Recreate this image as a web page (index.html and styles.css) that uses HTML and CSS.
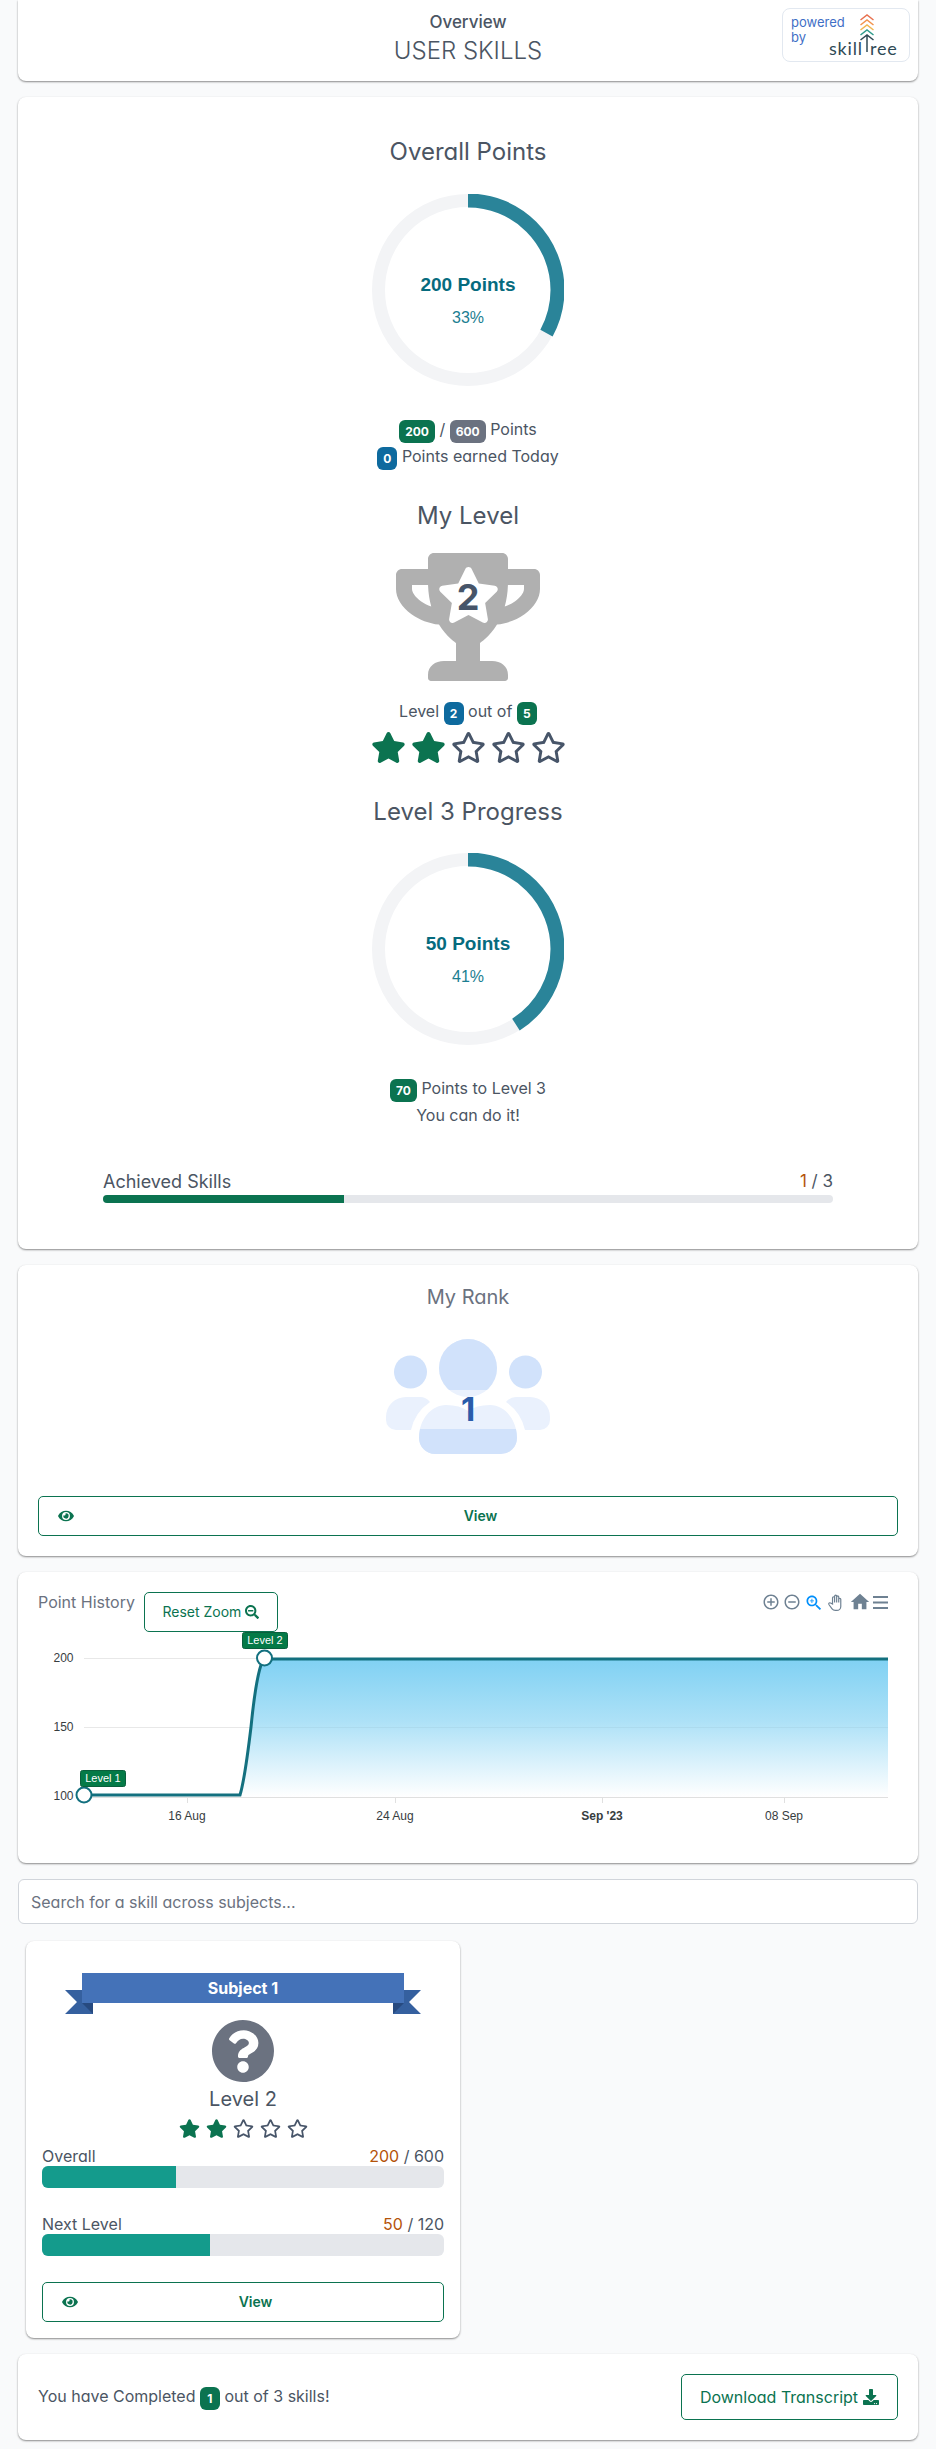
FILE: index.html
```html
<!DOCTYPE html>
<html lang="en">
<head>
    <meta charset="UTF-8">
    <meta name="viewport" content="width=device-width, initial-scale=1.0">
    <title>User Skills</title>
    <link rel="stylesheet" href="styles.css">
</head>
<body>
    <svg class="defs" width="0" height="0">
        <symbol id="star-full" viewBox="0 0 576 512"><path d="M259.3 17.8L194 150.2 47.9 171.5c-26.2 3.8-36.7 36.1-17.7 54.6l105.7 103-25 145.5c-4.5 26.3 23.2 46 46.4 33.7L288 439.6l130.7 68.7c23.2 12.2 50.9-7.4 46.4-33.7l-25-145.5 105.7-103c19-18.5 8.5-50.8-17.7-54.6L382 150.2 316.7 17.8c-11.7-23.6-45.6-23.9-57.4 0z"/></symbol>
        <symbol id="star-open" viewBox="0 0 576 512"><path d="M528.1 171.5L382 150.2 316.7 17.8c-11.7-23.6-45.6-23.9-57.4 0L194 150.2 47.9 171.5c-26.2 3.8-36.7 36.1-17.7 54.6l105.7 103-25 145.5c-4.5 26.3 23.2 46 46.4 33.7L288 439.6l130.7 68.7c23.2 12.2 50.9-7.4 46.4-33.7l-25-145.5 105.7-103c19-18.6 8.5-50.8-17.7-54.6zM388.6 312.3l23.7 138.4L288 385.4l-124.3 65.3 23.7-138.4-100.6-98 139-20.2 62.2-126 62.2 126 139 20.2-100.6 98z"/></symbol>
        <symbol id="eye" viewBox="0 0 576 512"><path d="M572.52 241.4C518.29 135.59 410.93 64 288 64S57.68 135.64 3.48 241.41a32.35 32.35 0 0 0 0 29.19C57.71 376.41 165.07 448 288 448s230.32-71.64 284.52-177.41a32.35 32.35 0 0 0 0-29.19zM288 400a144 144 0 1 1 144-144 143.93 143.93 0 0 1-144 144zm0-240a95.31 95.31 0 0 0-25.31 3.79 47.85 47.85 0 0 1-66.9 66.9A95.78 95.78 0 1 0 288 160z"/></symbol>
    </svg>

    <header class="card page-header">
        <div></div>
        <div class="page-title">
            <div class="title-small">Overview</div>
            <div class="title-big">USER SKILLS</div>
        </div>
        <div class="powered">
            <div class="powered-text">powered<br>by</div>
            <div class="logo">
                <span class="logo-text">skill<span class="logo-t">t</span>ree</span>
                <svg class="logo-arrows" width="16" height="38" viewBox="0 0 16 38">
                    <path d="M1.500 6l6.500-5 6.500 5" stroke="#e8714f"/>
                    <path d="M1.500 11l6.500-5 6.500 5" stroke="#f2944d"/>
                    <path d="M1.500 16l6.500-5 6.500 5" stroke="#f0b650"/>
                    <path d="M1.500 21l6.500-5 6.500 5" stroke="#2f9c8c"/>
                    <path d="M1.500 26l6.500-5 6.500 5M8 21v17" stroke="#2f4a55"/>
                </svg>
            </div>
        </div>
    </header>

    <section class="card overview">
        <h2 class="heading">Overall Points</h2>
        <svg class="donut donut-first" width="192" height="192" viewBox="0 0 192 192">
            <circle class="donut-track" cx="96" cy="96" r="89.5"/>
            <circle class="donut-value" cx="96" cy="96" r="89.5" pathLength="100" stroke-dasharray="33 100" transform="rotate(-90 96 96)"/>
            <text class="donut-big" x="96" y="97">200 Points</text>
            <text class="donut-small" x="96" y="129">33%</text>
        </svg>
        <div class="stat-lines">
            <div><span class="badge green">200</span> / <span class="badge gray">600</span> Points</div>
            <div><span class="badge blue">0</span> Points earned Today</div>
        </div>

        <h2 class="heading level-heading">My Level</h2>
        <svg class="trophy" width="144" height="128" viewBox="0 0 144 128">
            <svg width="144" height="128" viewBox="0 0 576 512"><path fill="#b0b0b0" d="M552 64H448V24c0-13.3-10.7-24-24-24H152c-13.3 0-24 10.7-24 24v40H24C10.7 64 0 74.7 0 88v56c0 35.7 22.5 72.4 61.9 100.7 31.5 22.7 69.8 37.1 110 41.7C203.3 338.5 240 360 240 360v72h-48c-35.3 0-64 20.7-64 56v12c0 6.6 5.4 12 12 12h296c6.6 0 12-5.4 12-12v-12c0-35.3-28.7-56-64-56h-48v-72s36.7-21.5 68.1-73.6c40.3-4.6 78.6-19 110-41.7 39.3-28.3 61.9-65 61.9-100.7V88c0-13.3-10.7-24-24-24zM99.3 192.8C74.9 175.2 64 155.6 64 144v-16h64.2c1 32.6 5.8 61.2 12.8 86.2-15.1-5.2-29.2-12.4-41.7-21.4zM512 144c0 16.1-17.7 36.1-35.3 48.8-12.5 9-26.7 16.2-41.8 21.4 7-25 11.8-53.6 12.8-86.2H512v16z"/></svg>
            <use href="#star-full" x="41" y="14" width="63" height="56" fill="#fff"/>
            <text class="trophy-num" x="72" y="57">2</text>
        </svg>
        <div class="level-line">Level <span class="badge blue">2</span> out of <span class="badge green">5</span></div>
        <div class="stars">
            <svg><use href="#star-full"/></svg>
            <svg><use href="#star-full"/></svg>
            <svg class="open"><use href="#star-open"/></svg>
            <svg class="open"><use href="#star-open"/></svg>
            <svg class="open"><use href="#star-open"/></svg>
        </div>

        <h2 class="heading progress-heading">Level 3 Progress</h2>
        <svg class="donut donut-second" width="192" height="192" viewBox="0 0 192 192">
            <circle class="donut-track" cx="96" cy="96" r="89.5"/>
            <circle class="donut-value" cx="96" cy="96" r="89.5" pathLength="100" stroke-dasharray="41 100" transform="rotate(-90 96 96)"/>
            <text class="donut-big" x="96" y="97">50 Points</text>
            <text class="donut-small" x="96" y="129">41%</text>
        </svg>
        <div class="stat-lines">
            <div><span class="badge green">70</span> Points to Level 3</div>
            <div>You can do it!</div>
        </div>

        <div class="achieved">
            <div class="achieved-row">
                <span>Achieved Skills</span>
                <span class="achieved-count"><span class="count">1</span> / 3</span>
            </div>
            <div class="thin-bar"><div class="thin-fill" style="width: 33%"></div></div>
        </div>
    </section>

    <section class="card rank">
        <h3 class="rank-title">My Rank</h3>
        <svg class="rank-icon" width="164" height="115" viewBox="386 1339 164 115">
            <defs>
                <clipPath id="head-top"><rect x="430" y="1330" width="80" height="60"/></clipPath>
                <clipPath id="body-bottom"><rect x="410" y="1429" width="120" height="30"/></clipPath>
            </defs>
            <circle class="rank-dark" cx="410.5" cy="1372" r="16.5"/>
            <circle class="rank-dark" cx="525.5" cy="1372" r="16.5"/>
            <path class="rank-light" d="M386 1417a20 20 0 0 1 20-20h14q6 0 10 5q-15 10-19 28h-15a10 10 0 0 1-10-10z"/>
            <path class="rank-light" d="M550 1417a20 20 0 0 0-20-20h-14q-6 0-10 5q15 10 19 28h15a10 10 0 0 0 10-10z"/>
            <circle class="rank-light" cx="468" cy="1368" r="29"/>
            <circle class="rank-dark" cx="468" cy="1368" r="29" clip-path="url(#head-top)"/>
            <path id="rank-body" class="rank-light" d="M419 1438c0-18 12-33 27-33q14 0 22 6q8-6 22-6c15 0 27 15 27 33a16 16 0 0 1-16 16h-66a16 16 0 0 1-16-16z"/>
            <path class="rank-dark" clip-path="url(#body-bottom)" d="M419 1438c0-18 12-33 27-33q14 0 22 6q8-6 22-6c15 0 27 15 27 33a16 16 0 0 1-16 16h-66a16 16 0 0 1-16-16z"/>
            <text class="rank-num" x="468" y="1421">1</text>
        </svg>
        <a class="view-btn">
            <svg class="view-eye"><use href="#eye"/></svg>
            <span class="view-text">View</span>
        </a>
    </section>

    <section class="card history">
        <div class="history-top">
            <span class="history-title">Point History</span>
            <a class="reset-btn">Reset Zoom
                <svg width="14" height="14" viewBox="0 0 512 512"><path d="M304 192v32c0 6.6-5.4 12-12 12H124c-6.6 0-12-5.4-12-12v-32c0-6.6 5.4-12 12-12h168c6.6 0 12 5.4 12 12zm201 284.7L476.7 505c-9.4 9.4-24.6 9.4-33.9 0L343 405.3c-4.5-4.5-7-10.6-7-17V372c-35.3 27.6-79.7 44-128 44C93.1 416 0 322.9 0 208S93.1 0 208 0s208 93.1 208 208c0 48.3-16.4 92.7-44 128h16.3c6.4 0 12.5 2.5 17 7l99.7 99.7c9.3 9.4 9.3 24.6 0 34zM344 208c0-75.2-60.8-136-136-136S72 132.8 72 208s60.8 136 136 136 136-60.8 136-136z"/></svg>
            </a>
            <div class="toolbar">
                <svg width="18" height="18" viewBox="0 0 24 24"><path d="M13 7h-2v4H7v2h4v4h2v-4h4v-2h-4V7zm-1-5C6.48 2 2 6.48 2 12s4.48 10 10 10 10-4.48 10-10S17.52 2 12 2zm0 18c-4.41 0-8-3.59-8-8s3.59-8 8-8 8 3.59 8 8-3.59 8-8 8z"/></svg>
                <svg width="18" height="18" viewBox="0 0 24 24"><path d="M7 11v2h10v-2H7zm5-9C6.48 2 2 6.48 2 12s4.48 10 10 10 10-4.48 10-10S17.52 2 12 2zm0 18c-4.41 0-8-3.59-8-8s3.59-8 8-8 8 3.59 8 8-3.59 8-8 8z"/></svg>
                <svg class="tool-active" width="20" height="20" viewBox="0 0 24 24"><path d="M15.5 14h-.79l-.28-.27C15.41 12.59 16 11.11 16 9.5 16 5.91 13.09 3 9.5 3S3 5.91 3 9.5 5.91 16 9.5 16c1.61 0 3.09-.59 4.23-1.57l.27.28v.79l5 4.99L20.49 19l-4.99-5zm-6 0C7.01 14 5 11.99 5 9.5S7.01 5 9.5 5 14 7.01 14 9.5 11.99 14 9.5 14z"/><path d="M12 10h-2v2H9v-2H7V9h2V7h1v2h2v1z"/></svg>
                <svg class="tool-hand" width="19" height="19" viewBox="0 0 24 24"><path d="M7 14V6a1.3 1.3 0 0 1 2.6 0v6V4a1.3 1.3 0 0 1 2.6 0v8V5a1.3 1.3 0 0 1 2.6 0v7V8a1.3 1.3 0 0 1 2.6 0v9a5 5 0 0 1-5 5h-2a5 5 0 0 1-4-2l-4-5.500a1.400 1.400 0 0 1 2.200-1.700z"/></svg>
                <svg class="tool-home" width="22" height="22" viewBox="0 0 24 24"><path d="M10 20v-6h4v6h5v-8h3L12 3 2 12h3v8z"/></svg>
                <svg class="tool-menu" width="15" height="14" viewBox="0 0 15 14"><path d="M0 0h15v2H0zM0 5.500h15v2H0zM0 11h15v2H0z"/></svg>
            </div>
        </div>
        <svg class="chart" width="860" height="211" viewBox="0 0 860 211">
            <defs>
                <linearGradient id="area-fill" x1="0" y1="0" x2="0" y2="1">
                    <stop offset="0" stop-color="#80d1f3"/>
                    <stop offset="0.45" stop-color="#ade1f7"/>
                    <stop offset="1" stop-color="#ffffff"/>
                </linearGradient>
            </defs>
            <line class="grid" x1="46" y1="26.500" x2="850" y2="26.500"/>
            <line class="grid" x1="46" y1="95.500" x2="850" y2="95.500"/>
            <line class="axis" x1="46" y1="165.500" x2="850" y2="165.500"/>
            <line class="axis" x1="149.500" y1="165" x2="149.500" y2="171"/>
            <line class="axis" x1="357.500" y1="165" x2="357.500" y2="171"/>
            <line class="axis" x1="564.500" y1="165" x2="564.500" y2="171"/>
            <line class="axis" x1="746.500" y1="165" x2="746.500" y2="171"/>
            <path fill="url(#area-fill)" d="M46 163H202C206 150 210 120 213 95C216 65 219 45 223 33C225 28 228 27 232 27H850V165H46z"/>
            <line class="grid-over" x1="214" y1="95.500" x2="850" y2="95.500"/>
            <path class="series" d="M46 163H202C206 150 210 120 213 95C216 65 219 45 223 33C225 28 228 27 232 27H850"/>
            <circle class="marker" cx="46" cy="163" r="7.500"/>
            <circle class="marker" cx="226.500" cy="26" r="7.500"/>
            <rect class="tag" x="42.500" y="138.500" width="45" height="16" rx="2"/>
            <text class="tag-text" x="65" y="150">Level 1</text>
            <rect class="tag" x="204.500" y="0.500" width="45" height="16" rx="2"/>
            <text class="tag-text" x="227" y="12">Level 2</text>
            <text class="y-label" x="35.500" y="30">200</text>
            <text class="y-label" x="35.500" y="99">150</text>
            <text class="y-label" x="35.500" y="168">100</text>
            <text class="x-label" x="149" y="188">16 Aug</text>
            <text class="x-label" x="357" y="188">24 Aug</text>
            <text class="x-label x-bold" x="564" y="188">Sep '23</text>
            <text class="x-label" x="746" y="188">08 Sep</text>
        </svg>
    </section>

    <input class="search" type="text" placeholder="Search for a skill across subjects...">

    <section class="card subject">
        <div class="ribbon">
            <svg class="ribbon-tails" width="356" height="24" viewBox="0 0 356 24">
                <path fill="#35609f" d="M0 0H17V13H28V24H0L12 12z"/>
                <path fill="#274a80" d="M17 13H28V24z"/>
                <path fill="#35609f" d="M356 0H339V13H328V24H356L344 12z"/>
                <path fill="#274a80" d="M339 13H328V24z"/>
            </svg>
            <div class="ribbon-bar">Subject 1</div>
        </div>
        <svg class="subject-icon" width="62" height="62" viewBox="8 8 496 496"><path d="M504 256c0 136.997-111.043 248-248 248S8 392.997 8 256C8 119.083 119.043 8 256 8s248 111.083 248 248zM262.655 90c-54.497 0-89.255 22.957-116.549 63.758-3.536 5.286-2.353 12.415 2.715 16.258l34.699 26.31c5.205 3.947 12.621 3.008 16.665-2.122 17.864-22.658 30.113-35.797 57.303-35.797 20.429 0 45.698 13.148 45.698 32.958 0 14.976-12.363 22.667-32.534 33.976C247.128 238.528 216 254.941 216 296v4c0 6.627 5.373 12 12 12h56c6.627 0 12-5.373 12-12v-1.333c0-28.462 83.186-29.647 83.186-106.667 0-58.002-60.165-102-116.531-102zM256 338c-25.365 0-46 20.635-46 46 0 25.364 20.635 46 46 46s46-20.636 46-46c0-25.365-20.635-46-46-46z"/></svg>
        <div class="subject-level">Level 2</div>
        <div class="stars stars-small">
            <svg><use href="#star-full"/></svg>
            <svg><use href="#star-full"/></svg>
            <svg class="open"><use href="#star-open"/></svg>
            <svg class="open"><use href="#star-open"/></svg>
            <svg class="open"><use href="#star-open"/></svg>
        </div>
        <div class="bar-label bar-first"><span>Overall</span><span><span class="count">200</span> / 600</span></div>
        <div class="thick-bar"><div class="thick-fill" style="width: 33.3%"></div></div>
        <div class="bar-label bar-second"><span>Next Level</span><span><span class="count">50</span> / 120</span></div>
        <div class="thick-bar"><div class="thick-fill" style="width: 41.7%"></div></div>
        <a class="view-btn subject-view">
            <svg class="view-eye"><use href="#eye"/></svg>
            <span class="view-text">View</span>
        </a>
    </section>

    <section class="card footer">
        <div>You have Completed <span class="badge green">1</span> out of 3 skills!</div>
        <a class="download-btn">Download Transcript
            <svg width="16" height="16" viewBox="0 0 512 512"><path d="M216 0h80c13.3 0 24 10.7 24 24v168h87.700c17.800 0 26.700 21.500 14.100 34.100L269.700 378.300c-7.500 7.500-19.800 7.500-27.300 0L90.100 226.100c-12.600-12.600-3.700-34.100 14.100-34.100H192V24c0-13.300 10.700-24 24-24zm296 376v112c0 13.300-10.700 24-24 24H24c-13.300 0-24-10.700-24-24V376c0-13.300 10.700-24 24-24h146.700l49 49c20.100 20.100 52.500 20.100 72.600 0l49-49H488c13.300 0 24 10.700 24 24zm-124 88c0-11-9-20-20-20s-20 9-20 20 9 20 20 20 20-9 20-20zm64 0c0-11-9-20-20-20s-20 9-20 20 9 20 20 20 20-9 20-20z"/></svg>
        </a>
    </section>
</body>
</html>
```

FILE: styles.css
```css
* {
    box-sizing: border-box;
}

body {
    margin: 0;
    padding: 0 18px 9px;
    background-color: #f9fafb;
    font-family: Inter, "Noto Sans", sans-serif;
    font-feature-settings: "cv11";
    font-size: 16px;
    line-height: 24px;
    color: #4b5563;
    display: flex;
    flex-direction: column;
    gap: 16px;
}

.defs {
    position: absolute;
}

.card {
    background-color: #fff;
    border-radius: 8px;
    box-shadow: 0 1px 2px rgba(0, 0, 0, 0.45);
}

/* Header */
.page-header {
    height: 81px;
    border-radius: 0 0 8px 8px;
    display: grid;
    grid-template-columns: 1fr auto 1fr;
    align-items: start;
    padding: 8px 8px 0;
}

.page-title {
    text-align: center;
    margin-top: 2px;
}

.title-small {
    font-size: 17px;
    font-weight: 500;
    line-height: 24px;
}

.title-big {
    font-size: 24px;
    font-weight: 300;
    line-height: 33px;
}

.powered {
    justify-self: end;
    position: relative;
    width: 128px;
    height: 54px;
    border: 1px solid #e2e8f0;
    border-radius: 8px;
    padding: 6px 8px;
}

.powered-text {
    font-size: 13px;
    line-height: 15px;
    color: #3f6fc6;
}

.logo {
    position: absolute;
    left: 46px;
    top: 5px;
    width: 70px;
    height: 44px;
}

.logo-arrows {
    position: absolute;
    left: 30px;
    top: 0;
    fill: none;
    stroke-width: 1.5;
}

.logo-text {
    position: absolute;
    left: 0;
    bottom: 0;
    font-family: Lato, sans-serif;
    font-size: 18px;
    line-height: 20px;
    letter-spacing: 0.8px;
    color: #2f4a55;
}

.logo-t {
    color: transparent;
}

/* Overview card */
.overview {
    height: 1152px;
    padding-top: 39px;
    display: flex;
    flex-direction: column;
    align-items: center;
}

.heading {
    margin: 0;
    font-size: 24px;
    font-weight: 400;
    line-height: 32px;
}

.donut {
    flex: none;
}

.donut-first {
    margin-top: 26px;
}

.donut-second {
    margin-top: 25px;
}

.donut-track {
    fill: none;
    stroke: #f3f4f6;
    stroke-width: 13;
}

.donut-value {
    fill: none;
    stroke: #2a8499;
    stroke-width: 14;
}

.donut-big {
    font-family: "Liberation Sans", Arial, sans-serif;
    font-size: 19px;
    font-weight: 700;
    text-anchor: middle;
    fill: #066b7e;
}

.donut-small {
    font-family: "Liberation Sans", Arial, sans-serif;
    font-size: 16px;
    text-anchor: middle;
    fill: #1c7e91;
}

.stat-lines {
    margin-top: 30px;
    text-align: center;
    line-height: 27px;
}

.badge {
    display: inline-block;
    min-width: 20px;
    padding: 0 6px;
    border-radius: 6px;
    font-size: 12px;
    font-weight: 700;
    line-height: 23px;
    color: #fff;
    text-align: center;
    vertical-align: -1px;
}

.green {
    background-color: #0b7350;
}

.gray {
    background-color: #6b7280;
}

.blue {
    background-color: #0e6a9e;
}

.level-heading {
    margin-top: 30px;
}

.trophy {
    margin-top: 21px;
    flex: none;
}

.trophy-num {
    font-size: 36px;
    font-weight: 700;
    text-anchor: middle;
    fill: #475569;
}

.level-line {
    margin-top: 16px;
    line-height: 28px;
}

.stars {
    display: flex;
    gap: 5px;
    margin-top: 7px;
    fill: #0b7350;
}

.stars svg {
    width: 35px;
    height: 31px;
}

.stars .open {
    fill: #475569;
}

.progress-heading {
    margin-top: 33px;
}

.achieved {
    align-self: stretch;
    margin: 39px 85px 0;
}

.achieved-row {
    display: flex;
    justify-content: space-between;
    height: 27px;
    font-size: 18px;
    line-height: 28px;
}

.achieved-count {
    font-size: 17px;
    line-height: 26px;
}

.count {
    color: #b45309;
}

.thin-bar {
    height: 8px;
    background-color: #e5e7eb;
    border-radius: 4px;
    overflow: hidden;
}

.thin-fill {
    height: 100%;
    background-color: #0b7350;
}

/* Rank */
.rank {
    height: 291px;
    padding: 18px 20px 20px;
    display: flex;
    flex-direction: column;
    align-items: center;
}

.rank-title {
    margin: 0;
    font-size: 20px;
    font-weight: 400;
    line-height: 28px;
    color: #6b7280;
}

.rank-icon {
    margin-top: 28px;
    flex: none;
}

.rank-dark {
    fill: #d1e2fb;
}

.rank-light {
    fill: #eaf1fd;
}

.rank-num {
    font-size: 33px;
    font-weight: 700;
    text-anchor: middle;
    fill: #2a5caa;
}

.view-btn {
    align-self: stretch;
    height: 40px;
    margin-top: 42px;
    padding: 0 10px 0 19px;
    display: flex;
    align-items: center;
    border: 1px solid #0b7350;
    border-radius: 5px;
    color: #0b7350;
    font-size: 14px;
    font-weight: 600;
}

.view-eye {
    width: 16px;
    height: 14px;
    fill: #0b7350;
    flex: none;
}

.view-text {
    flex: 1;
    text-align: center;
}

/* Point history */
.history {
    height: 291px;
    padding: 20px;
}

.history-top {
    display: flex;
    height: 40px;
}

.history-title {
    line-height: 20px;
    color: #6b7280;
}

.reset-btn {
    width: 134px;
    height: 40px;
    margin-left: 9px;
    display: flex;
    align-items: center;
    justify-content: center;
    gap: 4px;
    border: 1px solid #0b7350;
    border-radius: 5px;
    font-size: 14px;
    color: #0b7350;
    fill: #0b7350;
}

.toolbar {
    margin-left: auto;
    display: flex;
    align-items: flex-start;
    gap: 3px;
    margin-top: 1px;
    margin-right: 10px;
    fill: #6e8192;
}

.tool-active {
    fill: #008ffb;
}

.tool-hand {
    fill: #fff;
    stroke: #6e8192;
    stroke-width: 1.5;
}

.tool-home {
    margin-top: -2px;
}

.tool-menu {
    margin-top: 3px;
    margin-left: -1px;
}

.chart {
    display: block;
}

.grid {
    stroke: #e8e8e8;
}

.grid-over {
    stroke: rgba(0, 0, 0, 0.04);
}

.axis {
    stroke: #e0e0e0;
}

.series {
    fill: none;
    stroke: #13707f;
    stroke-width: 3;
}

.marker {
    fill: #fff;
    stroke: #13707f;
    stroke-width: 2;
}

.tag {
    fill: #047a47;
    stroke: #0a5f3c;
}

.tag-text {
    font-family: "Liberation Sans", Arial, sans-serif;
    font-size: 11px;
    text-anchor: middle;
    fill: #fff;
}

.y-label {
    font-family: "Liberation Sans", Arial, sans-serif;
    font-size: 12px;
    text-anchor: end;
    fill: #373d3f;
}

.x-label {
    font-family: "Liberation Sans", Arial, sans-serif;
    font-size: 12px;
    text-anchor: middle;
    fill: #373d3f;
}

.x-bold {
    font-weight: 700;
}

/* Search */
.search {
    height: 45px;
    margin-top: 0;
    padding: 0 12px;
    border: 1px solid #d1d5db;
    border-radius: 6px;
    background-color: #fff;
    font-family: inherit;
    font-feature-settings: inherit;
    font-size: 16px;
}

.search::placeholder {
    color: #6b7280;
}

/* Subject */
.subject {
    width: 434px;
    height: 397px;
    margin: 1px 0 0 8px;
    padding: 32px 16px 16px;
    display: flex;
    flex-direction: column;
    align-items: center;
}

.ribbon {
    position: relative;
    width: 356px;
    height: 41px;
    flex: none;
}

.ribbon-tails {
    position: absolute;
    left: 0;
    top: 17px;
}

.ribbon-bar {
    position: absolute;
    left: 17px;
    right: 17px;
    top: 0;
    height: 30px;
    background-color: #4472b8;
    color: #fff;
    font-weight: 700;
    line-height: 30px;
    text-align: center;
}

.subject-icon {
    margin-top: 6px;
    fill: #6b7280;
    flex: none;
}

.subject-level {
    margin-top: 3px;
    font-size: 20px;
    line-height: 28px;
}

.stars-small {
    gap: 6px;
    margin-top: 6px;
}

.stars-small svg {
    width: 21px;
    height: 19px;
}

.bar-label {
    align-self: stretch;
    display: flex;
    justify-content: space-between;
    height: 20px;
    line-height: 20px;
}

.bar-first {
    margin-top: 8px;
}

.bar-second {
    margin-top: 26px;
}

.thick-bar {
    align-self: stretch;
    height: 22px;
    background-color: #e5e7eb;
    border-radius: 6px;
    overflow: hidden;
    flex: none;
}

.thick-fill {
    height: 100%;
    background-color: #149b8c;
}

.subject-view {
    margin-top: 26px;
}

/* Footer */
.footer {
    height: 86px;
    padding: 0 20px;
    display: flex;
    justify-content: space-between;
    align-items: center;
}

.download-btn {
    width: 217px;
    height: 46px;
    display: flex;
    align-items: center;
    justify-content: center;
    gap: 5px;
    border: 1px solid #0b7350;
    border-radius: 5px;
    color: #0b7350;
    fill: #0b7350;
}
```
